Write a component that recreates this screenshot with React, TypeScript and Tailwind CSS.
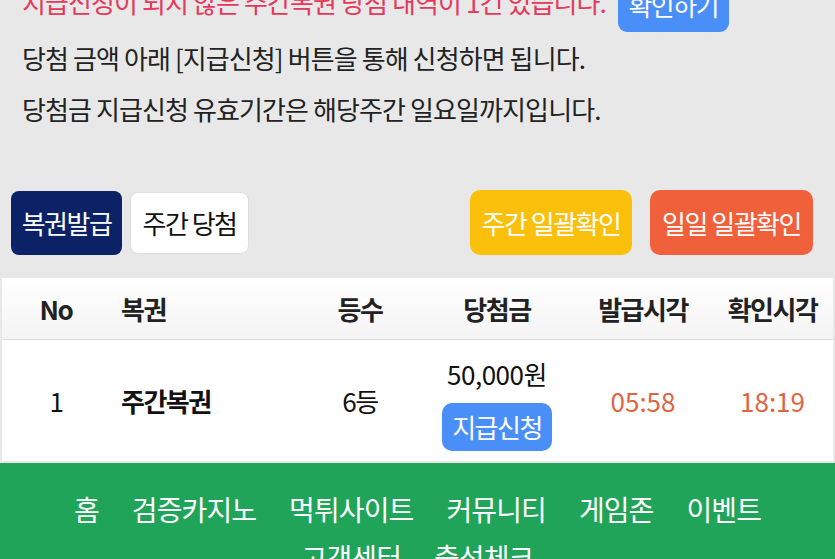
import React from 'react';

const font = { fontFamily: '"Noto Sans CJK KR", "Noto Sans", sans-serif' };

const navItems = ['홈', '검증카지노', '먹튀사이트', '커뮤니티', '게임존', '이벤트', '고객센터', '출석체크'];

const cols = 'grid grid-cols-[108px_190px_120px_154px_138px_1fr]';

export default function App() {
  return (
    <div className="h-[559px] w-[835px] overflow-hidden bg-[#e8e8e8]" style={font}>
      {/* notice */}
      <div className="-mt-[24px] px-[22px] text-[26px] tracking-[-0.9px] text-[#222]">
        <div className="flex items-end gap-[12px]">
          <p className="pb-[13px] leading-[34px] text-[#e5395c]">
            지급신청이 되지 않은 주간복권 당첨 내역이 1건 있습니다.
          </p>
          <button className="flex h-[56px] w-[111px] items-center justify-center rounded-[9px] bg-[#4a8ef8] text-[26px] tracking-[-1.5px] text-white">
            확인하기
          </button>
        </div>
        <p className="leading-[51px]">당첨 금액 아래 [지급신청] 버튼을 통해 신청하면 됩니다.</p>
        <p className="leading-[51px]">당첨금 지급신청 유효기간은 해당주간 일요일까지입니다.</p>
      </div>

      {/* buttons */}
      <div className="mt-[56px] flex items-center justify-between pl-[11px] pr-[22px] text-[26px] tracking-[-1.5px]">
        <div className="flex items-center gap-[8px]">
          <button className="flex h-[64px] w-[111px] items-center justify-center rounded-[8px] bg-[#0b2266] text-white">
            복권발급
          </button>
          <button className="flex h-[62px] w-[119px] items-center justify-center rounded-[8px] border border-[#dedede] bg-white text-[#111]">
            주간 당첨
          </button>
        </div>
        <div className="flex items-center gap-[18px]">
          <button className="flex h-[65px] w-[162px] items-center justify-center rounded-[10px] bg-[#fbc00c] text-white">
            주간 일괄확인
          </button>
          <button className="flex h-[65px] w-[163px] items-center justify-center rounded-[10px] bg-[#f0603a] text-white">
            일일 일괄확인
          </button>
        </div>
      </div>

      {/* table */}
      <div className="mx-[2px] mt-[23px] bg-white text-[26px] tracking-[-1.5px] text-[#111]">
        <div className={`${cols} h-[62px] items-center border-b border-[#dcdcdc] bg-gradient-to-b from-white to-[#f4f4f4] font-bold text-[#222]`}>
          <div className="text-center">No</div>
          <div className="pl-[11px]">복권</div>
          <div className="text-center">등수</div>
          <div className="text-center">당첨금</div>
          <div className="text-center">발급시각</div>
          <div className="text-center">확인시각</div>
        </div>
        <div className={`${cols} h-[121px] items-center`}>
          <div className="text-center">1</div>
          <div className="pl-[11px] font-bold">주간복권</div>
          <div className="text-center">6등</div>
          <div className="flex flex-col items-center pt-[6px]">
            <span className="leading-[34px] tracking-[-0.5px]">50,000원</span>
            <button className="mt-[12px] flex h-[48px] w-[110px] items-center justify-center rounded-[10px] bg-[#4a8ef8] text-white">
              지급신청
            </button>
          </div>
          <div className="text-center tracking-[0px] text-[#e0643f]">05:58</div>
          <div className="text-center tracking-[0px] text-[#e0643f]">18:19</div>
        </div>
      </div>

      {/* footer nav */}
      <div className="mt-[2px] bg-[#1fa45a] pt-[22px] pb-[20px]">
        <ul className="mx-auto flex max-w-[720px] flex-wrap justify-center gap-x-[33px] text-[28px] leading-[48px] tracking-[-0.9px] text-white">
          {navItems.map((n) => (
            <li key={n}>{n}</li>
          ))}
        </ul>
      </div>
    </div>
  );
}
